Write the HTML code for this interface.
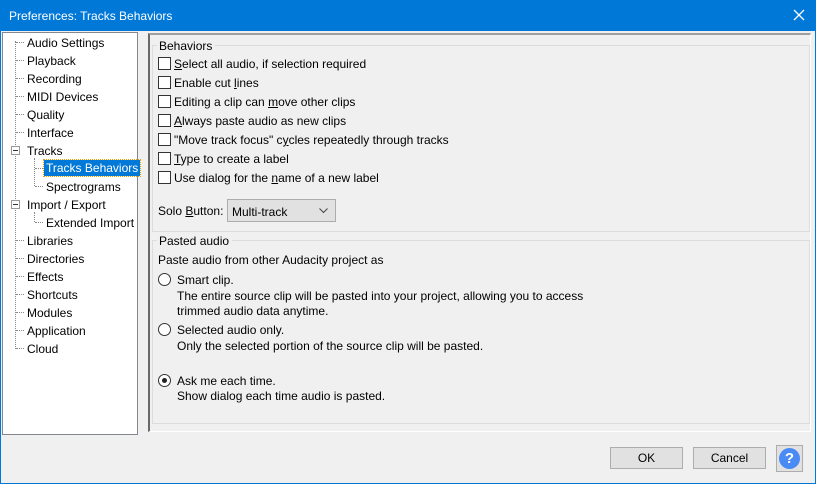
<!DOCTYPE html><html><head><style>
body{margin:0;width:816px;height:484px;overflow:hidden;background:#f0f0f0;font-family:"Liberation Sans",sans-serif;font-size:12px;color:#000;position:relative}
.a{position:absolute;white-space:nowrap}
.title{left:0;top:0;width:816px;height:31px;background:#0078d7;color:#fff;font-size:12px}
.tree{left:2px;top:32px;width:136px;height:403px;background:#fff;border:1px solid #828790;box-sizing:border-box}
.ti{position:absolute;line-height:14px;white-space:nowrap}
.dl{position:absolute;border-top:1px dotted #888;width:8px}
.dv{position:absolute;border-left:1px dotted #888}
.cb{position:absolute;left:158px;width:11px;height:11px;border:1px solid #333;background:#fff}
.rb{position:absolute;left:158px;width:11px;height:11px;border:1px solid #333;border-radius:50%;background:#fff}
.grp{position:absolute;border:1px solid #dcdcdc}
.btn{position:absolute;top:447px;width:71px;height:20px;border:1px solid #adadad;background:#e1e1e1;text-align:center;line-height:20px;font-size:12px}
u{text-decoration:underline}
</style></head><body>
<div style="position:absolute;left:0;top:0;width:814px;height:482px;border:1px solid #0078d7"></div>
<div class="a title"><span style="position:absolute;left:9px;top:9px">Preferences: Tracks Behaviors</span>
<svg style="position:absolute;left:793px;top:9px" width="12" height="12"><path d="M1 1L11 11M11 1L1 11" stroke="#fff" stroke-width="1.3"/></svg></div>
<div class="a tree">
<div class="dv" style="left:12px;top:8px;height:308px"></div>
<div class="dv" style="left:31px;top:125px;height:28px"></div>
<div class="dv" style="left:31px;top:179px;height:10px"></div>
<div class="dl" style="left:13px;top:9px"></div><div class="ti" style="left:24px;top:3px">Audio Settings</div>
<div class="dl" style="left:13px;top:27px"></div><div class="ti" style="left:24px;top:21px">Playback</div>
<div class="dl" style="left:13px;top:45px"></div><div class="ti" style="left:24px;top:39px">Recording</div>
<div class="dl" style="left:13px;top:63px"></div><div class="ti" style="left:24px;top:57px">MIDI Devices</div>
<div class="dl" style="left:13px;top:81px"></div><div class="ti" style="left:24px;top:75px">Quality</div>
<div class="dl" style="left:13px;top:99px"></div><div class="ti" style="left:24px;top:93px">Interface</div>
<div style="position:absolute;left:8px;top:113px;width:7px;height:7px;border:1px solid #999;background:#fff"><div style="position:absolute;left:1px;top:3px;width:5px;height:1px;background:#333"></div></div>
<div class="ti" style="left:24px;top:111px">Tracks</div>
<div class="dl" style="left:32px;top:135px"></div><div class="ti" style="left:41px;top:127px;height:16px;line-height:16px;background:#0078d7;color:#fff;padding:0 2px;outline:1px dotted #f0a000">Tracks Behaviors</div>
<div class="dl" style="left:32px;top:153px"></div><div class="ti" style="left:43px;top:147px">Spectrograms</div>
<div style="position:absolute;left:8px;top:167px;width:7px;height:7px;border:1px solid #999;background:#fff"><div style="position:absolute;left:1px;top:3px;width:5px;height:1px;background:#333"></div></div>
<div class="ti" style="left:24px;top:165px">Import / Export</div>
<div class="dl" style="left:32px;top:189px"></div><div class="ti" style="left:43px;top:183px">Extended Import</div>
<div class="dl" style="left:13px;top:207px"></div><div class="ti" style="left:24px;top:201px">Libraries</div>
<div class="dl" style="left:13px;top:225px"></div><div class="ti" style="left:24px;top:219px">Directories</div>
<div class="dl" style="left:13px;top:243px"></div><div class="ti" style="left:24px;top:237px">Effects</div>
<div class="dl" style="left:13px;top:261px"></div><div class="ti" style="left:24px;top:255px">Shortcuts</div>
<div class="dl" style="left:13px;top:279px"></div><div class="ti" style="left:24px;top:273px">Modules</div>
<div class="dl" style="left:13px;top:297px"></div><div class="ti" style="left:24px;top:291px">Application</div>
<div class="dl" style="left:13px;top:315px"></div><div class="ti" style="left:24px;top:309px">Cloud</div>
</div>
<div style="position:absolute;left:148px;top:33px;width:663px;height:399px;border-left:2px solid #696969;border-top:2px solid #a0a0a0;border-right:1px solid #fff;border-bottom:1px solid #fff;box-sizing:border-box"></div>
<div class="grp" style="left:152px;top:45px;width:656px;height:185px"></div>
<div class="a" style="left:157px;top:39px;background:#f0f0f0;padding:0 3px 0 2px">Behaviors</div>
<div class="cb" style="top:57px"></div><div class="a" style="left:174px;top:57px"><u>S</u>elect all audio, if selection required</div>
<div class="cb" style="top:76px"></div><div class="a" style="left:174px;top:76px">Enable cut <u>l</u>ines</div>
<div class="cb" style="top:95px"></div><div class="a" style="left:174px;top:95px">Editing a clip can <u>m</u>ove other clips</div>
<div class="cb" style="top:114px"></div><div class="a" style="left:174px;top:114px"><u>A</u>lways paste audio as new clips</div>
<div class="cb" style="top:133px"></div><div class="a" style="left:174px;top:133px">"Move track focus" c<u>y</u>cles repeatedly through tracks</div>
<div class="cb" style="top:152px"></div><div class="a" style="left:174px;top:152px"><u>T</u>ype to create a label</div>
<div class="cb" style="top:171px"></div><div class="a" style="left:174px;top:171px">Use dialog for the <u>n</u>ame of a new label</div>
<div class="a" style="left:158px;top:204px">Solo <u>B</u>utton:</div>
<div style="position:absolute;left:227px;top:199px;width:107px;height:21px;border:1px solid #adadad;background:#e1e1e1"><span style="position:absolute;left:4px;top:5px">Multi-track</span>
<svg style="position:absolute;left:91px;top:8px" width="9" height="6"><path d="M0.5 0.5L4.5 4.5L8.5 0.5" stroke="#444" fill="none"/></svg></div>
<div class="grp" style="left:152px;top:240px;width:656px;height:182px"></div>
<div class="a" style="left:157px;top:234px;background:#f0f0f0;padding:0 3px 0 2px">Pasted audio</div>
<div class="a" style="left:158px;top:253px">Paste audio from other Audacity project as</div>
<div class="rb" style="top:273px"></div><div class="a" style="left:177px;top:273px">Smart clip.</div>
<div class="a" style="left:177px;top:289px">The entire source clip will be pasted into your project, allowing you to access</div>
<div class="a" style="left:177px;top:304px">trimmed audio data anytime.</div>
<div class="rb" style="top:323px"></div><div class="a" style="left:177px;top:323px">Selected audio only.</div>
<div class="a" style="left:177px;top:339px">Only the selected portion of the source clip will be pasted.</div>
<div class="rb" style="top:374px"><div style="position:absolute;left:3px;top:3px;width:5px;height:5px;border-radius:50%;background:#222"></div></div>
<div class="a" style="left:177px;top:374px">Ask me each time.</div>
<div class="a" style="left:177px;top:389px">Show dialog each time audio is pasted.</div>
<div class="btn" style="left:610px">OK</div>
<div class="btn" style="left:693px">Cancel</div>
<div style="position:absolute;left:776px;top:445px;width:25px;height:25px;border:1px solid #adadad;background:#e1e1e1"><div style="position:absolute;left:2px;top:2px;width:21px;height:21px;border-radius:50%;background:#4a8af4;color:#fff;font-weight:bold;font-size:15px;text-align:center;line-height:21px">?</div></div>
</body></html>
